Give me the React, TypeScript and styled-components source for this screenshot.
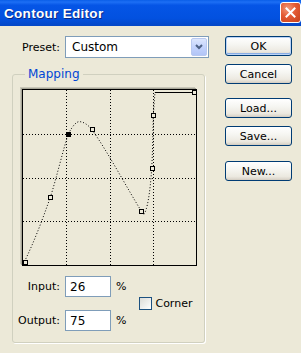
import React from "react";
import styled, { createGlobalStyle } from "styled-components";

const GlobalStyle = createGlobalStyle`
  html, body {
    margin: 0;
    padding: 0;
    background: #ece9d8;
  }
  body {
    font-family: "DejaVu Sans", "Liberation Sans", sans-serif;
    font-size: 11px;
    color: #000;
  }
`;

type Pt = { x: number; y: number; selected?: boolean };

const points: Pt[] = [
  { x: 1.5, y: 171.5 },
  { x: 27.3, y: 107.3 },
  { x: 45.3, y: 44, selected: true },
  { x: 68.7, y: 39.3 },
  { x: 118.3, y: 121 },
  { x: 128.7, y: 78.3 },
  { x: 130.3, y: 25 },
  { x: 171, y: 2.3 },
];

const GRAPH_W = 173;
const GRAPH_H = 175;

const Window = styled.div`
  width: 301px;
  height: 353px;
  background: #ece9d8;
  overflow: hidden;
`;

const TitleBar = styled.div`
  height: 26px;
  display: flex;
  align-items: center;
  justify-content: space-between;
  padding: 0 0 0 4px;
  background: linear-gradient(
    to bottom,
    #0a5ee8 0%,
    #1d6ff5 8%,
    #0555e6 20%,
    #0251e0 70%,
    #0447c6 100%
  );
`;

const Title = styled.span`
  font-family: "Liberation Sans", Arial, sans-serif;
  font-weight: bold;
  font-size: 13.5px;
  color: #fff;
  text-shadow: 1px 1px 0 #0a2a86;
  letter-spacing: 0.3px;
`;

const CloseButton = styled.div`
  width: 19px;
  height: 19px;
  margin-top: -2px;
  border: 1px solid #fff;
  border-radius: 3px;
  background: radial-gradient(circle at 35% 30%, #f39a7d 0%, #e35a33 45%, #c6401c 100%);
  display: flex;
  align-items: center;
  justify-content: center;
`;

const Body = styled.div`
  display: flex;
  padding-left: 12px;
`;

const LeftCol = styled.div`
  width: 193px;
`;

const RightCol = styled.div`
  display: flex;
  flex-direction: column;
  margin-left: 20px;
  padding-top: 10px;
`;

const PresetRow = styled.div`
  display: flex;
  align-items: center;
  margin-top: 10px;
  height: 22px;
`;

const Label = styled.label<{ $width: number }>`
  width: ${({ $width }) => $width}px;
  padding-right: 5px;
  box-sizing: border-box;
  text-align: right;
  flex-shrink: 0;
`;

const Select = styled.div`
  width: 144px;
  height: 22px;
  flex-shrink: 0;
  box-sizing: border-box;
  border: 1px solid #7f9db9;
  background: #fff;
  display: flex;
  align-items: center;
  justify-content: space-between;
  padding: 1px;
`;

const SelectText = styled.span`
  padding-left: 5px;
  font-size: 12px;
`;

const DropButton = styled.div`
  width: 16px;
  height: 18px;
  box-sizing: border-box;
  border: 1px solid #b9c9f0;
  border-radius: 2px;
  background: linear-gradient(to bottom, #dce6fd 0%, #c3d3fd 50%, #b2c5f7 100%);
  display: flex;
  align-items: center;
  justify-content: center;
`;

const Group = styled.fieldset`
  margin: 10px 0 0 0;
  padding: 0 0 11px 0;
  width: 193px;
  box-sizing: border-box;
  border: 1px solid #d0d0bf;
  border-radius: 3px;
  box-shadow: 1px 1px 0 #fff;
  min-width: 0;
`;

const Legend = styled.legend`
  color: #0046d5;
  margin-left: 12px;
  padding: 0 3px;
  font-size: 12px;
  line-height: 13px;
`;

const Graph = styled.div`
  margin: 8px 0 0 9px;
  width: ${GRAPH_W}px;
  height: ${GRAPH_H}px;
  border: 1px solid #000;
  box-shadow: -1px -1px 0 #a7a697, -2px -2px 0 #c8c6b8;
  background: #ece9d8;
`;

const FieldsArea = styled.div`
  display: flex;
  align-items: center;
  margin-top: 10px;
`;

const FieldsColumn = styled.div`
  display: flex;
  flex-direction: column;
  gap: 13px;
`;

const FieldRow = styled.div`
  display: flex;
  align-items: center;
  height: 21px;
`;

const TextBox = styled.div`
  width: 46px;
  height: 21px;
  box-sizing: border-box;
  border: 1px solid #7f9db9;
  background: #fff;
  padding-left: 4px;
  display: flex;
  align-items: center;
  font-size: 12px;
`;

const Unit = styled.span`
  margin-left: 5px;
`;

const CornerBox = styled.div`
  display: flex;
  align-items: center;
  margin-left: 13px;
`;

const Check = styled.div`
  width: 13px;
  height: 13px;
  box-sizing: border-box;
  border: 1px solid #1c5180;
  background: linear-gradient(135deg, #dcdcd7 0%, #fff 100%);
  margin-right: 3px;
`;

const Button = styled.div<{ $default?: boolean; $gap: number }>`
  width: 67px;
  height: 20px;
  margin-top: ${({ $gap }) => $gap}px;
  box-sizing: border-box;
  border: 1px solid #003c74;
  border-radius: 3px;
  background: linear-gradient(to bottom, #ffffff 0%, #f6f6f2 40%, #ece9e0 80%, #d6d0c5 100%);
  box-shadow: ${({ $default }) =>
    $default ? "inset 0 0 0 1px #bcd4f6, inset 0 -1px 0 1px #89ade4" : "inset 0 -1px 0 #d6d0c5"};
  display: flex;
  align-items: center;
  justify-content: center;
  font-size: 11px;
`;

const Curve: React.FC = () => (
  <svg width={GRAPH_W} height={GRAPH_H} viewBox={`0 0 ${GRAPH_W} ${GRAPH_H}`} style={{ display: "block" }}>
    {[1, 2, 3].map((i) => (
      <g key={i} stroke="#000" strokeWidth={1} strokeDasharray="1 2">
        <line x1={Math.round((GRAPH_W * i) / 4) + 0.5} y1={0} x2={Math.round((GRAPH_W * i) / 4) + 0.5} y2={GRAPH_H} />
        <line x1={0} y1={Math.round((GRAPH_H * i) / 4) + 0.5} x2={GRAPH_W} y2={Math.round((GRAPH_H * i) / 4) + 0.5} />
      </g>
    ))}
    <path
      d="M1.5,171.5 C12,150 20,128 27.3,107.3 C33,90 40,60 45.3,44 C50,35 54,31 57,31.7 C61,32 65,35 68.7,39.3 C85,62 105,100 118.3,121 C119.5,123 120,124.5 121,124.3 C124,120 127,105 128.7,78.3 C130,55 130,35 130.3,25 L132,2"
      fill="none"
      stroke="#000"
      strokeWidth={1}
      strokeDasharray="1 2"
    />
    <line x1={132} y1={2.5} x2={171} y2={2.5} stroke="#000" strokeWidth={1} />
    {points.map((p, i) =>
      p.selected ? (
        <rect key={i} x={Math.round(p.x) - 2} y={Math.round(p.y) - 2} width={5} height={5} fill="#000" />
      ) : (
        <rect
          key={i}
          x={Math.round(p.x) - 1.5}
          y={Math.round(p.y) - 1.5}
          width={4}
          height={4}
          fill="#ece9d8"
          stroke="#000"
          strokeWidth={1}
        />
      )
    )}
  </svg>
);

const App: React.FC = () => (
  <>
    <GlobalStyle />
    <Window>
      <TitleBar>
        <Title>Contour Editor</Title>
        <CloseButton>
          <svg width="11" height="11" viewBox="0 0 11 11">
            <path d="M1.5,1.5 L9.5,9.5 M9.5,1.5 L1.5,9.5" stroke="#fff" strokeWidth={2} strokeLinecap="square" />
          </svg>
        </CloseButton>
      </TitleBar>
      <Body>
        <LeftCol>
          <PresetRow>
            <Label $width={53}>Preset:</Label>
            <Select>
              <SelectText>Custom</SelectText>
              <DropButton>
                <svg width="8" height="6" viewBox="0 0 8 6">
                  <path d="M1,1 L4,4 L7,1" fill="none" stroke="#4d6185" strokeWidth={2} />
                </svg>
              </DropButton>
            </Select>
          </PresetRow>
          <Group>
            <Legend>Mapping</Legend>
            <Graph>
              <Curve />
            </Graph>
            <FieldsArea>
              <FieldsColumn>
                <FieldRow>
                  <Label $width={52}>Input:</Label>
                  <TextBox>26</TextBox>
                  <Unit>%</Unit>
                </FieldRow>
                <FieldRow>
                  <Label $width={52}>Output:</Label>
                  <TextBox>75</TextBox>
                  <Unit>%</Unit>
                </FieldRow>
              </FieldsColumn>
              <CornerBox>
                <Check />
                <span>Corner</span>
              </CornerBox>
            </FieldsArea>
          </Group>
        </LeftCol>
        <RightCol>
          <Button $default $gap={0}>OK</Button>
          <Button $gap={8}>Cancel</Button>
          <Button $gap={14}>Load...</Button>
          <Button $gap={8}>Save...</Button>
          <Button $gap={15}>New...</Button>
        </RightCol>
      </Body>
    </Window>
  </>
);

export default App;
